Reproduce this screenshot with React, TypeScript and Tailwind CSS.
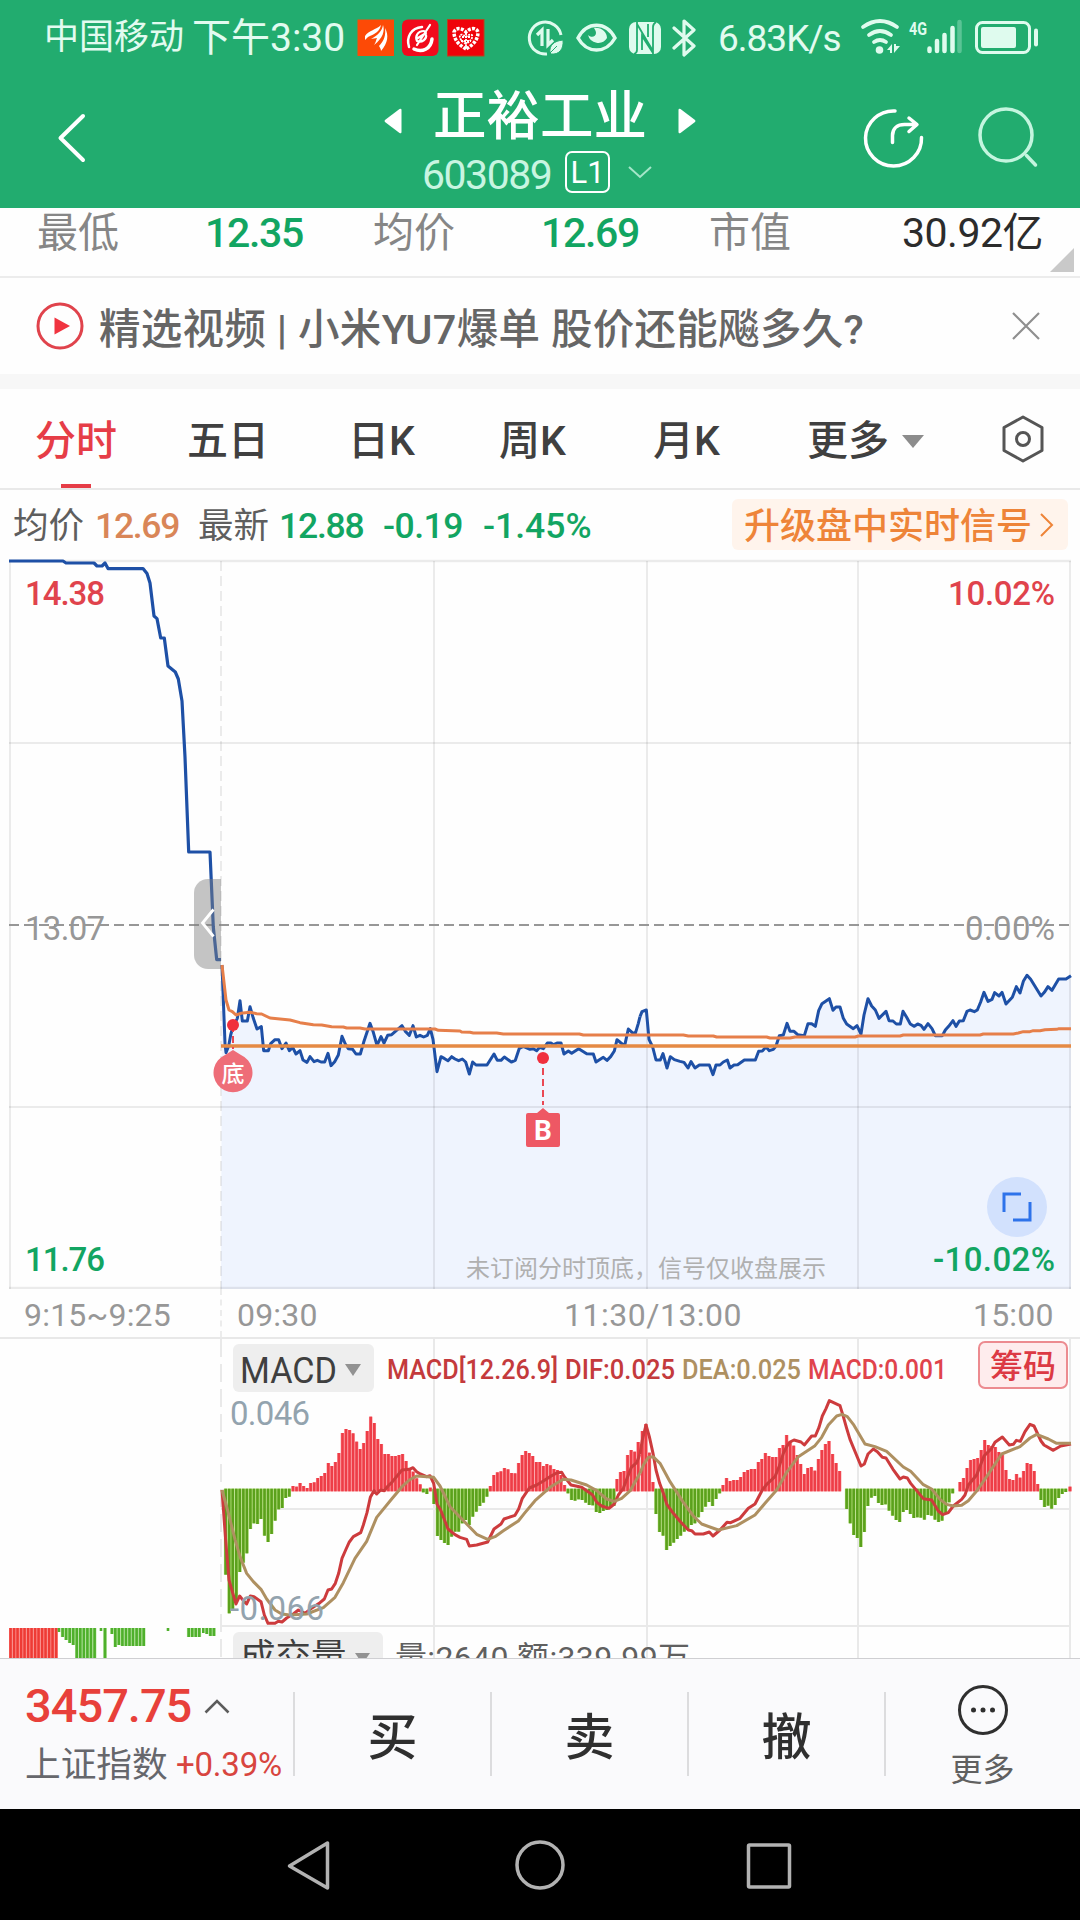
import { clsx } from 'clsx';

const STATS = [
  { label: '最低', value: '12.35' },
  { label: '均价', value: '12.69' },
];

const TABS = [
  { label: '五日', width: 'w-[161px]' },
  { label: '日K', width: 'w-[151px]' },
  { label: '周K', width: 'w-[154px]' },
  { label: '月K', width: 'w-[154px]' },
];

const GRID_X = [10, 434, 647, 858, 1070];

// Call auction, 9:15 ~ 9:25
const AUCTION =
  '9,561 63,561 66,563 94,563 97,566 102,566 105,563 108,568.6 143,568.6 147,573.6 150,583 154,616 157,618.6 160.7,638 164.3,638 168,666 175.3,672 178.3,679 182,701 185,757 188.7,852 210,852 213.3,927 216.7,959.6 221,959.6';

// The two sessions are stored in thirds of a pixel, each from its own origin
const PRICE_AM =
  '66,75 70,180 75,310 78,338 86,318 92,285 98,262 112,235 120,182 127,243 142,243 150,200 160,235 171,267 184,260 191,332 205,332 212,311 225,299 236,299 246,326 258,309 268,332 278,322 288,342 300,332 309,360 321,367 330,350 342,365 352,361 363,366 374,366 384,340 393,377 404,365 415,345 426,289 436,312 445,326 458,328 468,342 481,342 491,307 510,250 520,277 531,316 543,290 552,309 563,286 575,284 606,257 616,274 628,286 639,257 649,291 660,286 671,291 682,286 691,266 699,298 711,395 723,350 734,356 744,362 755,350 765,357 776,362 787,357 797,366 808,402 818,366 828,375 861,375 882,342 892,361 903,361 913,351 934,366 946,361 958,325 970,319 990,328 1000,326 1010,332 1019,322 1030,326 1042,309 1053,309 1061,314 1071,309 1083,309 1092,342 1105,333 1115,340 1136,326 1160,341 1180,342 1188,366 1210,352 1221,361 1232,350 1243,333 1251,299 1263,309 1274,317 1285,267 1297,278 1306,280 1315,250 1320,230';
const PRICE_PM =
  '0,230 6,215 19,210 27,298 38,321 48,360 61,360 69,341 81,384 91,350 103,359 120,364 132,367 144,384 153,365 165,384 178,375 208,375 219,404 228,375 240,375 250,366 262,360 270,384 282,375 293,374 313,360 346,360 356,334 367,333 378,321 388,332 400,328 408,318 418,287 430,285 441,250 450,274 462,274 473,284 493,287 504,251 515,251 526,259 536,212 546,191 568,176 579,211 588,201 600,201 610,235 620,252 640,266 651,257 663,282 672,225 684,176 695,198 706,210 717,235 738,214 747,242 759,243 769,252 781,252 789,214 800,232 811,252 823,259 833,252 843,256 852,268 864,251 876,266 886,287 907,287 916,270 926,259 939,242 948,259 958,243 970,242 981,214 990,210 1003,215 1012,210 1022,186 1032,157 1044,184 1056,178 1064,158 1077,168 1086,157 1098,192 1117,172 1129,140 1140,159 1150,124 1161,106 1172,118 1203,168 1213,157 1224,140 1236,151 1256,117 1278,117 1293,107';
const AVG_AM =
  '66,75 78,180 87,210 97,215 108,225 122,220 150,217 170,221 185,222 210,234 270,240 300,248 340,254 365,255 395,260 430,261 440,264 480,264 495,267 705,267 715,271 780,273 785,276 810,277 820,279 890,279 910,282 1138,282 1150,285 1320,285';
const AVG_PM =
  '0,285 130,285 145,288 220,288 230,291 380,291 390,294 450,294 465,291 645,291 655,288 780,288 790,285 1020,285 1030,282 1120,282 1135,279 1150,275 1170,275 1180,272 1200,272 1215,269 1250,268 1257,266 1293,266';

const DIF_AM =
  '36,330 47,480 57,600 67,635 78,672 89,648 100,662 110,672 121,648 132,650 153,665 163,705 174,730 195,730 205,724 216,726 230,714 250,702 265,690 285,700 300,688 330,668 343,657 354,630 365,627 376,610 386,580 396,535 407,510 418,486 430,470 452,458 460,435 471,398 481,352 492,332 500,342 512,330 523,332 534,318 545,308 576,270 598,268 609,263 620,275 631,282 650,290 660,287 671,310 681,372 692,390 714,447 735,464 750,472 770,478 778,498 800,495 833,486 852,447 873,432 882,417 915,406 926,387 937,355 958,324 980,315 1000,303 1020,290 1040,279 1055,277 1063,290 1083,315 1115,322 1148,345 1160,367 1175,378 1197,385 1213,372 1225,345 1240,325 1253,290 1264,262 1280,248 1290,222';
const DIF_PM =
  '0,222 7,180 18,135 28,170 39,220 48,270 59,310 70,340 81,374 100,400 120,424 145,450 155,452 165,462 190,462 208,456 219,468 240,450 261,427 272,428 300,415 325,385 345,372 367,330 380,313 405,290 418,258 430,220 441,198 450,186 462,180 483,186 493,195 515,168 526,168 537,142 547,108 558,86 568,62 600,77 610,110 620,145 630,178 663,258 673,252 684,222 700,207 712,215 727,232 738,234 759,268 780,297 790,291 802,294 812,310 850,356 875,360 895,393 908,404 925,398 940,378 965,358 975,345 985,315 1010,285 1032,228 1055,205 1065,187 1087,171 1108,195 1120,193 1129,181 1141,184 1155,155 1170,133 1182,138 1203,183 1212,195 1240,211 1262,198 1293,192';
const DEA_AM =
  '36,330 50,380 75,478 90,530 110,580 130,605 153,628 170,657 195,690 215,702 240,705 290,702 340,683 375,652 400,608 435,535 470,484 500,412 545,357 576,320 598,300 620,288 671,292 690,318 720,380 770,432 800,463 833,478 855,470 880,452 925,423 945,398 975,362 1020,322 1060,298 1083,300 1130,315 1160,332 1190,357 1213,364 1235,355 1260,333 1290,280';
const DEA_PM =
  '0,280 10,255 25,232 39,230 60,250 90,305 130,367 160,408 185,432 235,450 290,437 345,405 375,370 410,330 440,277 475,230 525,197 545,172 565,135 590,108 606,103 622,110 640,133 675,192 705,200 740,214 790,261 812,274 850,314 875,327 900,358 920,373 940,378 965,376 985,362 1010,333 1040,290 1085,222 1140,200 1170,174 1190,163 1225,177 1250,190 1293,190';

// Runs of MACD bars: first x, then the y where each bar ends (zero line at 330)
const BARS_AM: [number, number[]][] = [
  [47, [584, 700, 690, 665, 576, 548, 520, 447, 430, 432, 417, 467, 486, 462, 422, 388, 384, 354, 350]],
  [249, [318, 320, 309, 318, 324, 309, 307, 294, 288, 279, 249, 258, 246, 219, 159, 147, 150, 160, 185, 207, 189, 153, 110, 129, 177, 192, 222, 222, 228, 228, 225, 222, 243, 265, 275, 295, 313]],
  [640, [337, 342, 323, 372, 468, 480, 489, 495, 470, 455, 455, 430, 420, 435, 410, 395, 378, 368, 350]],
  [841, [318, 285, 277, 274, 264, 268, 279, 280, 249, 225, 213, 219, 228, 246, 246, 258, 252, 256, 267, 270, 285, 315]],
  [1074, [340, 360, 362, 358, 360, 368, 375, 376, 396, 399, 393, 390, 384, 378]],
  [1221, [297, 276, 273, 225, 210, 215, 186]],
];
const BARS_PM: [number, number[]][] = [
  [7, [153, 132, 218, 306]],
  [48, [402, 456, 467, 510, 498, 488, 477, 467, 455, 450, 435, 430, 412, 396, 380, 366, 378, 357, 340]],
  [249, [315, 294, 303, 300, 300, 291, 276, 270, 267, 267, 246, 237, 219, 228, 231, 231, 204, 195, 165, 185, 197, 225, 252, 282, 264, 261, 272, 237, 210, 192, 183, 222, 249, 273]],
  [620, [387, 430, 465, 474, 501, 456, 378, 353, 348, 369, 375, 373, 392, 407, 420, 426, 396, 390, 402, 414, 412, 413, 419, 405, 407, 419, 426, 422, 400, 367, 340]],
  [960, [306, 294, 264, 240, 237, 234, 210, 180, 195, 198, 201, 216, 225, 270, 297, 300, 282, 293, 273, 249, 252, 273, 312]],
  [1203, [360, 381, 377, 386, 375, 354, 342, 336]],
  [1290, [320]],
];

const AUCTION_VOLUME = [
  [59, 4], [62.6, 9], [66.1, 12], [69.7, 15], [73.2, 17], [76.8, 30], [80.3, 30], [83.9, 30], [87.4, 30], [91, 30], [94.6, 30],
  [101, 3], [105, 30], [112, 6], [115.3, 19], [118.9, 17], [122.4, 18], [126, 18], [129.5, 18], [133, 18], [136.6, 18], [140.1, 18], [143.7, 18],
  [168, 3], [188.7, 9], [192.2, 9], [195.8, 9], [199.3, 9], [203.3, 5], [206.8, 6], [210.4, 8], [213.9, 8],
];

function Bars({ runs }: { runs: [number, number[]][] }) {
  return (
    <>
      {runs.map(([start, ends]) => {
        const x = (i: number) => start + i * 10.6;
        return ends.map((end, i) => {
          const up = end < 330;
          const y = up ? end : 326;
          const h = up ? 334 - end : end - 326;
          return (
            <g key={`${start}-${i}`}>
              <rect x={x(i) - 5.3} y={y} width="10.6" height={h} fill={up ? '#fb8d93' : '#a8d76c'} />
              <rect x={x(i) - 3.8} y={y} width="7.6" height={h} fill={up ? '#ee3d47' : '#5ba11c'} />
            </g>
          );
        });
      })}
    </>
  );
}

function StatusBar() {
  return (
    <div className="flex h-[72px] items-center pl-[44px] pt-[3px] text-[#e2fbf0]">
      <span className="w-[148px] text-[35px] leading-none">中国移动</span>
      <span className="w-[165px] pt-[2px] text-[39px] leading-none">下午3:30</span>
      <svg className="h-[38px] w-[128px]" viewBox="0 0 128 38">
        <rect x="0.5" y="0.5" width="36.500" height="36.500" fill="#fd4a06" />
        <path d="M8 17c4-6 11-6 16-11-1 6-6 9-13 12l-3 3zM14 20c7-4 11-8 12-14 2 6 0 13-9 20 2-3 2-5 3-7zM22 27c5-5 7-11 6-18 4 7 3 15-4 23 0-2-1-3-2-5z" fill="#fff" />
        <rect x="45" y="0.5" width="36.500" height="36.500" rx="6" fill="#f10b1c" />
        <g fill="none" stroke="#fff" strokeLinecap="round">
          <path d="M52 28c-3-10 2-19 13-20" strokeWidth="2.500" />
          <path d="M57 30c8 4 17 0 18-10" strokeWidth="3.500" />
          <path d="M73 6 60 26M67 12c-7 0-9 6-7 10 5 2 10-2 9-6M61 19l8-5" strokeWidth="2.200" />
        </g>
        <rect x="90.500" y="0.500" width="36.500" height="36.500" fill="#ef0209" stroke="#b3471f" />
        <path d="M109 30c-7-4-12-9-12-17 2-5 8-4 12 0 4-4 10-5 12 0 0 8-5 13-12 17z" fill="none" stroke="#fff" strokeWidth="3.500" strokeDasharray="3 1.300" />
        <path d="M109 25c-4-3-7-5-6-9 2-1 4 0 6 2 2-2 4-3 6-2 1 4-2 6-6 9zM109 14v14M105 18h8M104 22h10" fill="none" stroke="#fff" strokeWidth="1.800" strokeDasharray="2 1" />
      </svg>
      <svg className="ml-[42px] h-[38px] w-[170px]" viewBox="527 18 170 38" fill="none" stroke="#dffbee">
        <path d="M561 34a16 16 0 1 0-14 19" strokeWidth="3" />
        <path d="M537 34l5-5v16M548 28v16l5-5" strokeWidth="3.200" />
        <path d="M550 52c-1-8 4-12 13-13 1 9-4 15-12 14zM547 55l10-10" fill="#dffbee" stroke="#22ac6f" strokeWidth="1" />
        <path d="M578 37c9-17 28-17 37 0-9 16-28 16-37 0z" strokeWidth="3.500" />
        <path d="M588 34c3 3 8 2 8-2 0-2-1-3-2-5 7-1 13 4 13 10a10.500 10.500 0 0 1-19-3z" fill="#dffbee" stroke="none" />
        <rect x="629" y="21" width="32" height="32" rx="7" fill="#dffbee" stroke="none" />
        <path d="M637 21v28q0 3-3 4M653 53V26q0-3 3-5M637 23l16 27M642 49V35l11 17M648 23v13" stroke="#22ac6f" strokeWidth="1.800" />
        <path d="M674 27l20 18-10 9V20l10 9-20 18" strokeWidth="3.200" strokeLinejoin="round" strokeLinecap="round" />
      </svg>
      <span className="ml-[21px] w-[142px] pt-[2px] text-[37px] leading-none tracking-[-1px]">6.83K/s</span>
      <svg className="h-[38px] w-[180px] overflow-visible" viewBox="859 18 180 38" fill="none" stroke="#dffbee" strokeLinecap="round">
        <path d="M862 26q17-12 34 0M868 34q11-8 22 0M873 41q6-4 12 0" strokeWidth="3.800" />
        <circle cx="878.500" cy="49" r="3.800" fill="#dffbee" stroke="none" />
        <path d="M886 49l5-6v9h-2v-3zM893 43v9l6-7h-4v-2z" fill="#dffbee" stroke="none" />
        <text x="908" y="34" fontSize="19" fontWeight="700" textLength="18" lengthAdjust="spacingAndGlyphs" fill="#dffbee" stroke="none">4G</text>
        <path d="M928.500 47.500v2.500M936 40v10M943.500 34v16M951.500 27v23" strokeWidth="4.500" />
        <path d="M958.500 21v29" strokeWidth="4.500" opacity="0.300" />
        <rect x="975.500" y="21.500" width="53" height="30" rx="6" strokeWidth="3" />
        <rect x="980" y="26" width="35" height="21" rx="2" fill="#dffbee" stroke="none" />
        <path d="M1035 29.500v14" strokeWidth="4" />
      </svg>
    </div>
  );
}

function Header() {
  return (
    <header className="h-[208px] shrink-0 bg-[#22ac6f] text-white">
      <StatusBar />
      <div className="flex h-[136px] items-start">
        <svg className="ml-[57px] mt-[41px] h-[50px] w-[30px]" viewBox="0 0 30 50" fill="none" stroke="#fff" strokeWidth="4" strokeLinecap="round" strokeLinejoin="round">
          <path d="M26 3 3.500 25 26 47" />
        </svg>
        <div className="ml-[297px] w-[312px] pt-[17px]">
          <div className="flex items-center justify-between">
            <svg className="mt-[8px] h-[26px] w-[18px]" viewBox="0 0 18 26"><path d="M17.500 2v22q0 2-2 1L1 14q-1-1 0-2L15.500 1q2-1 2 1z" fill="#fff" /></svg>
            <h1 className="text-[53.500px] font-medium leading-[56px]">正裕工业</h1>
            <svg className="mt-[8px] h-[26px] w-[18px]" viewBox="0 0 18 26"><path d="M0.500 2v22q0 2 2 1L17 14q1-1 0-2L2.500 1q-2-1-2 1z" fill="#fff" /></svg>
          </div>
          <div className="flex h-[48px] items-center pl-[38px] pt-[6px]">
            <span className="w-[143px] pt-[6px] text-[41px] leading-[42px] tracking-[-1.500px] text-[#c8f5e1]">603089</span>
            <span className="flex h-[42px] w-[45px] items-center justify-center rounded-[7px] border-2 border-white text-[31px] leading-none">L1</span>
            <svg className="ml-[17px] h-[14px] w-[26px]" viewBox="0 0 26 14" fill="none" stroke="#a5e6c9" strokeWidth="2"><path d="M2 2l11 10L24 2" /></svg>
          </div>
        </div>
        <svg className="ml-[167px] mt-[35px] h-[62px] w-[62px]" viewBox="863 107 62 62" fill="none" stroke="#fff" strokeWidth="3.500" strokeLinecap="round" strokeLinejoin="round">
          <path d="M895 111a28 27.500 0 1 0 26.500 26.500M892.500 142.500v-7c0-7 5-11 12-11h12M909 118l8 6.500-8 7" />
        </svg>
        <svg className="ml-[51px] mt-[34px] h-[62px] w-[64px]" viewBox="975 106 64 62" fill="none" stroke="#c4f5df" strokeWidth="3.500" strokeLinecap="round">
          <circle cx="1005" cy="135" r="26" />
          <path d="M1025.500 155.500l9 9.500" />
        </svg>
      </div>
    </header>
  );
}

function StatsRow() {
  return (
    <div className="relative flex h-[70px] shrink-0 border-b-2 border-[#ececec] pl-[37px] pt-[4px] text-[41px] leading-[42px]">
      {STATS.map((s) => (
        <div key={s.label} className="flex w-[336px]">
          <span className="w-[168px] text-[#868686]">{s.label}</span>
          <span className="font-medium tracking-[-1.300px] text-[#12a562]">{s.value}</span>
        </div>
      ))}
      <span className="w-[193px] text-[#868686]">市值</span>
      <span className="tracking-[-0.500px] text-[#2c2c2c]">30.92亿</span>
      <div className="absolute bottom-[4px] right-[6px] size-[24px] bg-[#c9c9c9] [clip-path:polygon(100%_0,100%_100%,0_100%)]" />
    </div>
  );
}

function NewsRow() {
  return (
    <div className="flex h-[96px] shrink-0 items-center pl-[36px]">
      <svg className="size-[48px]" viewBox="0 0 48 48">
        <circle cx="24" cy="24" r="22" fill="none" stroke="#e0434c" strokeWidth="3" />
        <path d="M18.500 15.500v17L34 24z" fill="#f0333f" />
      </svg>
      <p className="ml-[15px] w-[913px] whitespace-pre pt-[7px] text-[41.500px] font-medium leading-none tracking-[0.300px] text-[#666666]">精选视频 | 小米YU7爆单 股价还能飚多久?</p>
      <svg className="size-[28px]" viewBox="0 0 28 28" stroke="#8f8f8f" strokeWidth="2.200"><path d="M1 1l26 26M27 1 1 27" /></svg>
    </div>
  );
}

function Tabs() {
  return (
    <div className="flex h-[101px] shrink-0 items-center border-b-2 border-[#e9e9e9] pl-[35px] text-[41px] font-medium leading-none text-[#404040]">
      <div className="relative flex h-full w-[152px] items-center pt-[6px] text-[#e63d47]">
        分时
        <i className="absolute bottom-0 left-[26px] h-[4px] w-[30px] bg-[#e63d47]" />
      </div>
      {TABS.map((t) => (
        <div key={t.label} className={clsx('shrink-0 pt-[6px]', t.width)}>{t.label}</div>
      ))}
      <div className="flex w-[194px] items-center pt-[6px]">
        更多
        <i className="ml-[13px] h-[13px] w-[22px] bg-[#8c8c8c] [clip-path:polygon(0_0,100%_0,50%_100%)]" />
      </div>
      <svg className="h-[48px] w-[44px]" viewBox="0 0 44 48" fill="none" stroke="#555" strokeWidth="3" strokeLinejoin="round">
        <path d="M22 2 L41 12.500V35.500L22 46L3 35.500V12.500z" />
        <circle cx="22" cy="24" r="6.500" />
      </svg>
    </div>
  );
}

function QuoteRow() {
  return (
    <div className="flex h-[69px] shrink-0 items-center pl-[13px] text-[35.500px] leading-none">
      <span className="w-[82px] pt-[5px] text-[#5e5e5e]">均价</span>
      <span className="w-[103px] pt-[5px] font-medium tracking-[-1.300px] text-[#d98658]">12.69</span>
      <span className="w-[81px] pt-[5px] text-[#5e5e5e]">最新</span>
      <span className="w-[104px] pt-[5px] font-medium tracking-[-1.200px] text-[#12a562]">12.88</span>
      <span className="w-[100px] pt-[5px] font-medium tracking-[-0.500px] text-[#12a562]">-0.19</span>
      <span className="w-[249px] pt-[5px] font-medium text-[#12a562]">-1.45%</span>
      <div className="flex h-[51px] w-[336px] items-center rounded-[6px] bg-[#fff4ec] pl-[12px] text-[#ee8438]">
        <span className="w-[296px] pt-[4px] text-[36px] font-medium">升级盘中实时信号</span>
        <svg className="h-[26px] w-[14px]" viewBox="0 0 14 26" fill="none" stroke="#ee8438" strokeWidth="2"><path d="M1 2l11 11L1 24" /></svg>
      </div>
    </div>
  );
}

function PriceChart() {
  return (
    <svg className="h-[730px] w-full shrink-0" viewBox="0 559 1080 730">
      <g fill="#eff4fe">
        <polygon transform="translate(200 940) scale(0.33333)" points={`${PRICE_AM} 1321,1047 63,1047`} />
        <polygon transform="translate(640 940) scale(0.33333)" points={`${PRICE_PM} 1293,1047 0,1047`} />
      </g>
      <g stroke="#000" strokeOpacity="0.075" strokeWidth="2">
        {GRID_X.map((x) => <path key={x} d={`M${x} 561V1289`} />)}
        <path d="M9 743H1071M9 1107H1071" />
        <path d="M9 561H1071M9 1288H1071" strokeWidth="2.500" />
        <path d="M221 561V1289" strokeDasharray="10 5" />
      </g>

      <g fontSize="33" fontWeight="500">
        <text x="25" y="605" textLength="80" fill="#e0434c">14.38</text>
        <text x="948" y="605" textLength="107" fill="#e0434c">10.02%</text>
        <text x="25" y="940" textLength="80" fontWeight="400" fill="#979797">13.07</text>
        <text x="965" y="940" textLength="90" fontWeight="400" fill="#979797">0.00%</text>
        <text x="25" y="1271" textLength="80" fill="#12a562">11.76</text>
        <text x="933" y="1271" textLength="122" fill="#12a562">-10.02%</text>
      </g>
      <text x="466" y="1277" fontSize="24" textLength="360" fill="#b0b0b0">未订阅分时顶底，信号仅收盘展示</text>
      <path d="M9 925H1071" stroke="#979797" strokeWidth="2" strokeDasharray="10 5" />

      <polyline points={AUCTION} fill="none" stroke="#1e50a6" strokeWidth="3.200" strokeLinejoin="round" />
      <path d="M221 879H208a14 14 0 0 0-14 14v62a14 14 0 0 0 14 14h13z" fill="#808080" fillOpacity="0.460" />
      <path d="M213.500 909.500 202.500 923l11 13.500" fill="none" stroke="#fff" strokeWidth="2.800" />

      <g transform="translate(200 940) scale(0.33333)" fill="none" strokeLinejoin="round">
        <polyline points={PRICE_AM} stroke="#1e50a6" strokeWidth="9" />
        <polyline points={AVG_AM} stroke="#e67f4a" strokeWidth="9" />
      </g>
      <g transform="translate(640 940) scale(0.33333)" fill="none" strokeLinejoin="round">
        <polyline points={PRICE_PM} stroke="#1e50a6" strokeWidth="9" />
        <polyline points={AVG_PM} stroke="#e67f4a" strokeWidth="9" />
      </g>
      <path d="M221 1046H1071" stroke="#e58a44" strokeWidth="3.400" />

      {/* Signals */}
      <path d="M233 1025v24M543 1068v37" stroke="#ea4853" strokeWidth="2" strokeDasharray="7 4" />
      <circle cx="233" cy="1025" r="6" fill="#f02f3d" />
      <circle cx="543" cy="1058" r="6" fill="#f02f3d" />
      <path d="M233 1050l8 5a19.500 19.500 0 1 1-16 0z" fill="#ee6d78" />
      <text x="233" y="1081.500" fontSize="23" fontWeight="500" textAnchor="middle" fill="#fff">底</text>
      <path d="M543 1108l6 5h9q2 0 2 2v30q0 2-2 2h-30q-2 0-2-2v-30q0-2 2-2h9z" fill="#ee5864" />
      <text x="543" y="1140" fontSize="28" fontWeight="700" textAnchor="middle" fill="#fff">B</text>

      <circle cx="1017" cy="1207" r="30" fill="#d2e1fd" />
      <path d="M1004 1212v-18h17M1030 1202v18h-17" fill="none" stroke="#2e73ea" strokeWidth="3" />
    </svg>
  );
}

function TimeAxis() {
  return (
    <div className="relative flex h-[50px] shrink-0 items-center border-b-2 border-[#e8e8e8] pl-[24px] pt-[3px] text-[32px] leading-none tracking-[0.200px] text-[#979797]">
      <span className="w-[213px]">9:15~9:25</span>
      <span className="w-[327px]">09:30</span>
      <span className="w-[409px] tracking-[0.500px]">11:30/13:00</span>
      <span>15:00</span>
      <i className="absolute left-[220px] top-0 h-full border-l-2 border-dashed border-[#ececec]" />
    </div>
  );
}

function IndicatorChart() {
  return (
    <svg className="h-[319px] w-full shrink-0" viewBox="0 1339 1080 319">
      <g stroke="#e9e9e9" strokeWidth="2">
        {GRID_X.slice(1).map((x) => <path key={x} d={`M${x} 1339V1658`} />)}
        <path d="M221 1509H1071M221 1626H1071" />
        <path d="M221 1339V1658" strokeDasharray="18 7" />
      </g>

      <g transform="translate(210 1380) scale(0.33333)" fill="none" strokeLinejoin="round">
        <Bars runs={BARS_AM} />
        <polyline points={DIF_AM} stroke="#cd3b3d" strokeWidth="9" />
        <polyline points={DEA_AM} stroke="#ae9061" strokeWidth="9" />
      </g>
      <g transform="translate(640 1380) scale(0.33333)" fill="none" strokeLinejoin="round">
        <Bars runs={BARS_PM} />
        <polyline points={DIF_PM} stroke="#cd3b3d" strokeWidth="9" />
        <polyline points={DEA_PM} stroke="#ae9061" strokeWidth="9" />
      </g>

      <rect x="233" y="1344" width="141" height="48" rx="6" fill="#eeeeee" />
      <text x="240" y="1383" fontSize="36" textLength="97" lengthAdjust="spacingAndGlyphs" fill="#3f3f3f">MACD</text>
      <path d="M345 1364h16l-8 12z" fill="#929292" />
      <g fontSize="27" fontWeight="500">
        <text x="387" y="1379" textLength="171" lengthAdjust="spacingAndGlyphs" fill="#c43a3c">MACD[12.26.9]</text>
        <text x="565" y="1379" textLength="110" lengthAdjust="spacingAndGlyphs" fill="#c43a3c">DIF:0.025</text>
        <text x="682" y="1379" textLength="119" lengthAdjust="spacingAndGlyphs" fill="#ae9061">DEA:0.025</text>
        <text x="808" y="1379" textLength="139" lengthAdjust="spacingAndGlyphs" fill="#e0434c">MACD:0.001</text>
      </g>
      <rect x="979" y="1342" width="88" height="46" rx="6" fill="#feeced" stroke="#ec8b90" strokeWidth="2" />
      <text x="990" y="1378" fontSize="33" fontWeight="500" fill="#dc3a44">筹码</text>
      <text x="230" y="1425" fontSize="33" textLength="80" fill="#93a3ae">0.046</text>
      <text x="230" y="1620" fontSize="33" textLength="94" fill="#93a3ae">-0.066</text>

      {/* Volume panel, cut by the trade bar */}
      {Array.from({ length: 14 }, (_, i) => (
        <g key={i}>
          <rect x={9 + i * 3.5} y="1628" width="3.500" height="31" fill="#fb8a86" />
          <rect x={9.3 + i * 3.5} y="1628" width="2.500" height="31" fill="#ee3b35" />
        </g>
      ))}
      {AUCTION_VOLUME.map(([x, h]) => (
        <g key={x}>
          {h > 5 && <rect x={x - 1.8} y="1628" width="3.600" height={h} fill="#b4e39d" />}
          <rect x={x - 1.3} y="1628" width="2.600" height={h} fill="#4fb02c" />
        </g>
      ))}
      <rect x="233" y="1632" width="150" height="40" rx="6" fill="#eeeeee" />
      <text x="240" y="1669" fontSize="35.500" fill="#3f3f3f">成交量</text>
      <path d="M355 1653h15l-7.500 11z" fill="#929292" />
      <text x="395" y="1669" fontSize="32" textLength="295" fill="#606060">量:2640 额:339.99万</text>
    </svg>
  );
}

function TradeBar() {
  return (
    <div className="flex h-[151px] shrink-0 border-t border-[#cfcfd2] bg-[#fafafc]">
      <div className="w-[293px] pl-[25px] pt-[22px]">
        <div className="flex items-center text-[47px] font-medium leading-[50px] tracking-[-1px] text-[#e8403a]">
          3457.75
          <svg className="ml-[13px] h-[15px] w-[26px]" viewBox="0 0 26 15" fill="none" stroke="#5c5c5c" strokeWidth="2.600"><path d="M1.500 13.500 13 2l11.500 11.500" /></svg>
        </div>
        <div className="mt-[15px] flex items-center leading-[38px]">
          <span className="w-[151px] text-[35.700px] text-[#66676c]">上证指数</span>
          <span className="text-[33px] tracking-[-0.200px] text-[#d8453f]">+0.39%</span>
        </div>
      </div>
      {['买', '卖', '撤'].map((label) => (
        <div key={label} className="mt-[33px] flex h-[84px] w-[197px] items-center justify-center border-l-2 border-[#dcdcde] pt-[8px] text-[50px] font-medium leading-none text-[#2f2f2f]">
          {label}
        </div>
      ))}
      <div className="mt-[33px] h-[84px] w-[195px] border-l-2 border-[#dcdcde]">
        <div className="-mt-[8px] flex flex-col items-center">
          <svg className="size-[52px]" viewBox="0 0 52 52" fill="#2f2f2f">
            <circle cx="26" cy="26" r="23.500" fill="none" stroke="#2f2f2f" strokeWidth="3" />
            <circle cx="16.500" cy="26" r="2.500" /><circle cx="26" cy="26" r="2.500" /><circle cx="35.500" cy="26" r="2.500" />
          </svg>
          <span className="mt-[18px] text-[32px] leading-none text-[#606060]">更多</span>
        </div>
      </div>
    </div>
  );
}

function NavBar() {
  return (
    <div className="flex h-[111px] shrink-0 items-center justify-center bg-black">
      <svg className="h-[54px] w-[510px]" viewBox="285 1837 510 54" fill="none" stroke="#b2b2b2" strokeWidth="3.500" strokeLinejoin="round">
        <path d="M327.500 1842v45L289.500 1865z" />
        <circle cx="540" cy="1864" r="23" />
        <rect x="748.500" y="1844" width="41" height="42" rx="1" />
      </svg>
    </div>
  );
}

export default function App() {
  return (
    <div className="flex h-[1920px] w-[1080px] flex-col overflow-hidden bg-[#fefefe] font-[Roboto,'Noto_Sans_CJK_SC',sans-serif]">
      <Header />
      <StatsRow />
      <NewsRow />
      <div className="h-[15px] shrink-0 bg-[#f7f7f7]" />
      <Tabs />
      <QuoteRow />
      <PriceChart />
      <TimeAxis />
      <IndicatorChart />
      <TradeBar />
      <NavBar />
    </div>
  );
}
